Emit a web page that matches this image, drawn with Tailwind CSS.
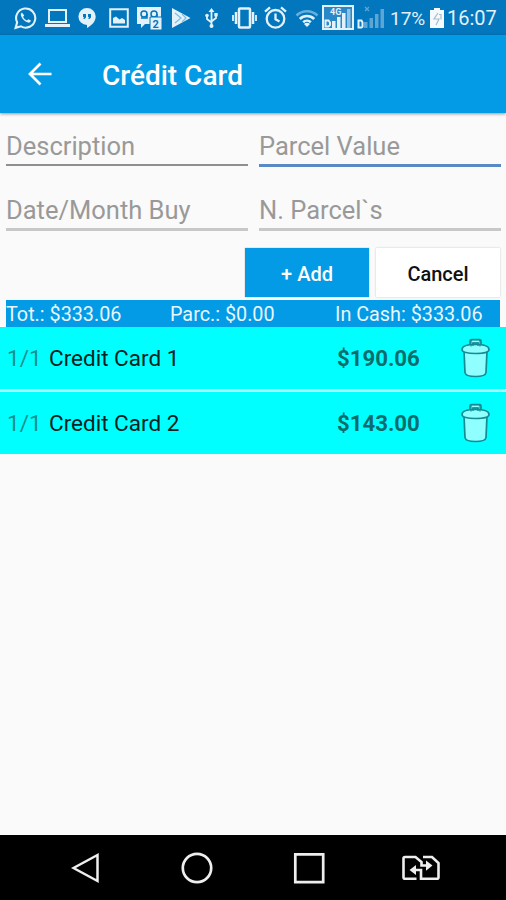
<!DOCTYPE html>
<html lang="en">
<head>
  <meta charset="UTF-8" />
  <meta name="viewport" content="width=device-width, initial-scale=1.0" />
  <title>Crédit Card</title>
  <script src="https://cdn.jsdelivr.net/npm/@tailwindcss/browser@4"></script>
</head>
<body class="font-['Roboto',sans-serif] bg-[#fafafa] w-[506px] h-[900px] flex flex-col overflow-hidden">

  <!-- Status bar -->
  <div class="h-[35px] shrink-0 bg-[#0277bd] flex items-center pl-[14px] text-[#e3f1fb] whitespace-nowrap">
    <svg class="w-[23px] h-[24px] shrink-0" viewBox="0 0 24 24" fill="none" stroke="currentColor" stroke-width="2.200">
      <path d="M1.700 22.300l1.600-5.700A10 10 0 1 1 7.200 20.700z" />
      <path d="M8.300 6.300c-1.300.8-1.500 2.300-.8 4 1.300 3.200 4 5.800 7.300 6.500 1.500.2 2.700-.6 2.900-2.100l-2.800-1.500-1.400 1.500c-1.900-.8-3.200-2.100-4-3.900l1.200-1.400z" fill="currentColor" stroke="none" />
    </svg>
    <svg class="w-[25px] h-[20px] shrink-0 ml-[8px]" viewBox="0 0 25 20">
      <path d="M4 2h17v12H4z" fill="none" stroke="currentColor" stroke-width="2" />
      <path d="M0 16h25v3H0z" fill="currentColor" />
    </svg>
    <svg class="w-[18px] h-[20px] shrink-0 ml-[8px] mr-[1px]" viewBox="0 0 18 20">
      <path d="M9 0a8.700 8.500 0 0 1 8.700 8.500c0 5-4 9-8.700 11.500v-3A8.600 8.500 0 0 1 9 0z" fill="currentColor" />
      <path d="M5 6h3v3.500L6.500 11H5.300l.7-2H5zM10 6h3v3.500L11.500 11h-1.200l.7-2h-1z" fill="#0277bd" />
    </svg>
    <svg class="w-[20px] h-[20px] shrink-0 ml-[12px]" viewBox="0 0 20 20">
      <path d="M1.200 1.200h17.600v17.600H1.200z" fill="none" stroke="currentColor" stroke-width="2" />
      <path d="M4 15.500V10l3-1.500 3.500 3 2.500-1.500 3 2v3.500z" fill="currentColor" />
    </svg>
    <svg class="w-[25px] h-[24px] shrink-0 ml-[8px]" viewBox="0 0 25 24">
      <path d="M0 1h24v17H8l-4 4v-4H0z" fill="currentColor" />
      <g fill="none" stroke="#0277bd" stroke-width="1.500">
        <circle cx="7" cy="8" r="3" /><circle cx="17" cy="8" r="3" /><path d="M10 8v4H4M20 8v4" />
      </g>
      <path d="M13 11h12v13H13z" fill="currentColor" stroke="#0277bd" />
      <text x="15.500" y="22" font-size="11" font-weight="700" fill="#0277bd">2</text>
    </svg>
    <svg class="w-[20px] h-[20px] shrink-0 ml-[9px]" viewBox="0 0 20 20">
      <path d="M1 0l18.500 10L1 20z" fill="currentColor" />
      <path d="M4 5l6 5-6 5M11 6l4 4-4 4" fill="none" stroke="#7dbae0" stroke-width="1.200" />
    </svg>
    <svg class="w-[13px] h-[20px] shrink-0 ml-[14px]" viewBox="0 0 13 20" fill="none" stroke="currentColor" stroke-width="1.800">
      <path d="M6.500 3v15M2 7v4l4.500 3.500M11 6v4l-4.500 3.500" />
      <path d="M6.500 0l3 4h-6z" fill="currentColor" stroke="none" />
      <circle cx="6.500" cy="18" r="2" fill="currentColor" stroke="none" />
      <circle cx="2" cy="7.500" r="1.800" fill="currentColor" stroke="none" />
      <path d="M9.300 5h3.400v3.400H9.300z" fill="currentColor" stroke="none" />
    </svg>
    <svg class="w-[25px] h-[22px] shrink-0 ml-[14px]" viewBox="0 0 25 22" fill="none" stroke="currentColor" stroke-width="2.500">
      <rect x="7" y="1.500" width="11" height="19" rx="1" />
      <path d="M4 5v12M21 5v12" /><path d="M1 8v6M24 8v6" stroke-width="1.800" />
    </svg>
    <svg class="w-[23px] h-[23px] shrink-0 ml-[7px]" viewBox="0 0 23 23" fill="none" stroke="currentColor" stroke-width="2.300">
      <circle cx="11.500" cy="12.800" r="8.800" />
      <path d="M11.500 7.500v5.800l4 2.300M1 5.600l5-4.200M22 5.600l-5-4.200" />
    </svg>
    <svg class="w-[24px] h-[18px] shrink-0 ml-[8px]" viewBox="0 0 24 18" fill="none" stroke="currentColor" stroke-width="2.600">
      <path d="M1.500 6.500a15 15 0 0 1 21 0" opacity=".45" />
      <path d="M4.800 10a10.300 10.300 0 0 1 14.400 0" />
      <path d="M8.200 13.300a5.500 5.500 0 0 1 7.600 0" />
      <path d="M12 18l-3-3a4 4 0 0 1 6 0z" fill="currentColor" stroke="none" />
    </svg>
    <svg class="w-[32px] h-[25px] shrink-0 ml-[3px]" viewBox="0 0 32 25">
      <path d="M1 1h30v23H1z" fill="#2b88c6" stroke="currentColor" stroke-width="2" />
      <path d="M10 16h3.500v7H10zM15 12h3.500v11H15zM20 8h3.500v15H20z" fill="currentColor" />
      <path d="M25 4h3.500v19H25z" fill="#8fc1e2" />
      <path d="M3.500 15.500h3l1.500 2v2.500l-1.500 1.500h-3z" fill="none" stroke="currentColor" stroke-width="2" />
      <text x="8" y="10" font-size="9" font-weight="700" fill="currentColor">4G</text>
    </svg>
    <svg class="w-[28px] h-[23px] shrink-0 ml-[3px]" viewBox="0 0 28 23">
      <path d="M7 16h3.500v6H7zM12.500 12H16v10h-3.500zM18 8h3.500v14H18zM23.500 3H27v19h-3.500z" fill="#5ba6d5" />
      <path d="M1.500 14.500h3l1 2v4l-1 1h-3z" fill="none" stroke="currentColor" stroke-width="2" />
      <path d="M8 1l4 4M12 1l-4 4" stroke="#5ba6d5" stroke-width="1.300" />
    </svg>
    <span class="ml-[5px] w-[40px] mt-px text-[19px] leading-none">17%</span>
    <svg class="w-[14px] h-[20px] shrink-0" viewBox="0 0 14 20">
      <path d="M4 0h6v2h4v18H0V2h4z" fill="#f4fafd" />
      <path d="M8 5L4 11h5l-3 6M9 6.500h2v5" fill="none" stroke="#a9bcc8" stroke-width="1.200" />
    </svg>
    <span class="ml-[3px] mt-px text-[20px] leading-none">16:07</span>
  </div>

  <!-- App bar -->
  <header class="relative h-[78px] shrink-0 bg-[#039be5] flex items-center text-white shadow-[0_1px_3px_rgba(0,0,0,0.4)]">
    <svg class="ml-[28px] w-[24px] h-[24px]" viewBox="0 0 24 24" fill="none" stroke="currentColor" stroke-width="2.700">
      <path d="M23.500 12H2.500M12.500 1.500L2 12l10.500 10.500" />
    </svg>
    <h1 class="ml-[50px] mt-[4px] text-[28px] leading-8 font-medium whitespace-nowrap">Crédit Card</h1>
  </header>

  <!-- Form -->
  <div class="h-[135px] shrink-0 px-[6px] grid grid-cols-[242px_242px] gap-x-[11px] grid-rows-[54px_64px] text-[25.500px] text-[#999999] whitespace-nowrap">
    <div class="flex flex-col justify-end"><span class="leading-8 pb-[2px]">Description</span><div class="h-[2px] mb-[1px] bg-[#8f8f8f]"></div></div>
    <div class="flex flex-col justify-end"><span class="leading-8 pb-[2px]">Parcel Value</span><div class="h-[3px] bg-[#5a8ac6]"></div></div>
    <div class="flex flex-col justify-end"><span class="leading-8 pb-[2px]">Date/Month Buy</span><div class="h-[3px] bg-[#c8c8c8]"></div></div>
    <div class="flex flex-col justify-end"><span class="leading-8 pb-[2px]">N. Parcel`s</span><div class="h-[3px] bg-[#c8c8c8]"></div></div>
  </div>

  <!-- Buttons -->
  <div class="h-[52px] shrink-0 flex justify-end items-start gap-[7px] pr-[6px] text-[20px] font-medium">
    <button class="w-[124px] h-[49px] bg-[#039be5] text-white pt-[2px] shadow-[0_0_1px_rgba(0,0,0,0.4)]">+ Add</button>
    <button class="w-[124px] h-[49px] bg-white text-[#111111] pt-[2px] shadow-[0_0_2px_rgba(0,0,0,0.2)]">Cancel</button>
  </div>

  <!-- Totals -->
  <div class="h-[27px] shrink-0 mx-[6px] bg-[#039be5] text-[#e9f6fd] text-[19.800px] leading-[29px] grid grid-cols-[164px_165px_1fr] whitespace-nowrap">
    <span>Tot.: $333.06</span>
    <span>Parc.: $0.00</span>
    <span>In Cash: $333.06</span>
  </div>

  <!-- Card list -->
  <div class="shrink-0 bg-[#a6fafd] flex flex-col gap-[3px] text-[22.500px] whitespace-nowrap">
    <div class="h-[62px] bg-[#00ffff] flex items-center pl-[7px] pr-[16px]">
      <span class="w-[42px] pt-[2px] text-[#168f8f]">1/1</span>
      <span class="w-[288px] pt-[2px] text-[#032222]">Credit Card 1</span>
      <span class="pt-[2px] text-[22.200px] font-bold text-[#0c6c6c]">$190.06</span>
      <svg class="ml-auto w-[29px] h-[40px]" viewBox="0 0 29 40" fill="#8fffff" stroke="#148c94" stroke-width="1.700">
        <path d="M9 8V3Q9 1.500 10.500 1.500h8Q20 1.500 20 3V8h-3V5h-5v3z" />
        <path d="M3 13l1 21.500Q4.500 38.500 14.500 38.500T25 34.500L26 13z" />
        <path d="M1 11.500C1 8 7 6.500 14.500 6.500S28 8 28 11.500c0 2.700-6 4-13.500 4S1 14.200 1 11.500z" />
        <path d="M10 8.500V3Q10 2 11 2h7q1 0 1 1v5.500M12 8V5h5v3" fill="none" stroke-width="1.200" />
      </svg>
    </div>
    <div class="h-[62px] bg-[#00ffff] flex items-center pl-[7px] pr-[16px]">
      <span class="w-[42px] pt-[2px] text-[#168f8f]">1/1</span>
      <span class="w-[288px] pt-[2px] text-[#032222]">Credit Card 2</span>
      <span class="pt-[2px] text-[22.200px] font-bold text-[#0c6c6c]">$143.00</span>
      <svg class="ml-auto w-[29px] h-[40px]" viewBox="0 0 29 40" fill="#8fffff" stroke="#148c94" stroke-width="1.700">
        <path d="M9 8V3Q9 1.500 10.500 1.500h8Q20 1.500 20 3V8h-3V5h-5v3z" />
        <path d="M3 13l1 21.500Q4.500 38.500 14.500 38.500T25 34.500L26 13z" />
        <path d="M1 11.500C1 8 7 6.500 14.500 6.500S28 8 28 11.500c0 2.700-6 4-13.500 4S1 14.200 1 11.500z" />
        <path d="M10 8.500V3Q10 2 11 2h7q1 0 1 1v5.500M12 8V5h5v3" fill="none" stroke-width="1.200" />
      </svg>
    </div>
  </div>

  <!-- Navigation bar -->
  <nav class="mt-auto h-[65px] shrink-0 bg-black text-[#eeeeee] flex items-center pl-[71px]">
    <svg class="w-[29px] h-[32px]" viewBox="0 0 29 32" fill="none" stroke="currentColor" stroke-width="2.500">
      <path d="M26.500 3v26L2.500 16z" />
    </svg>
    <svg class="w-[32px] h-[32px] ml-[81px]" viewBox="0 0 32 32" fill="none" stroke="currentColor" stroke-width="2.700">
      <circle cx="16" cy="16" r="14.200" />
    </svg>
    <svg class="w-[32px] h-[32px] ml-[80px]" viewBox="0 0 32 32" fill="none" stroke="currentColor" stroke-width="2.700">
      <path d="M2.300 2.300h27.900v27.900H2.300z" />
    </svg>
    <svg class="w-[38px] h-[26px] ml-[77px]" viewBox="0 0 38 26" fill="none" stroke="currentColor" stroke-width="2.600">
      <path d="M14.500 23.700H3Q1.500 23.700 1.500 22.200V3.500Q1.500 2 3 2h10.500l6 5v3.500H27" />
      <path d="M21 2h9l6.500 6v14.200q0 1.500-1.500 1.500H19V15h-7" />
      <path d="M24 5.500l6.500 5.100-6.500 5.100zM14 10L7.500 15l6.500 5z" fill="currentColor" stroke="none" />
    </svg>
  </nav>

</body>
</html>
